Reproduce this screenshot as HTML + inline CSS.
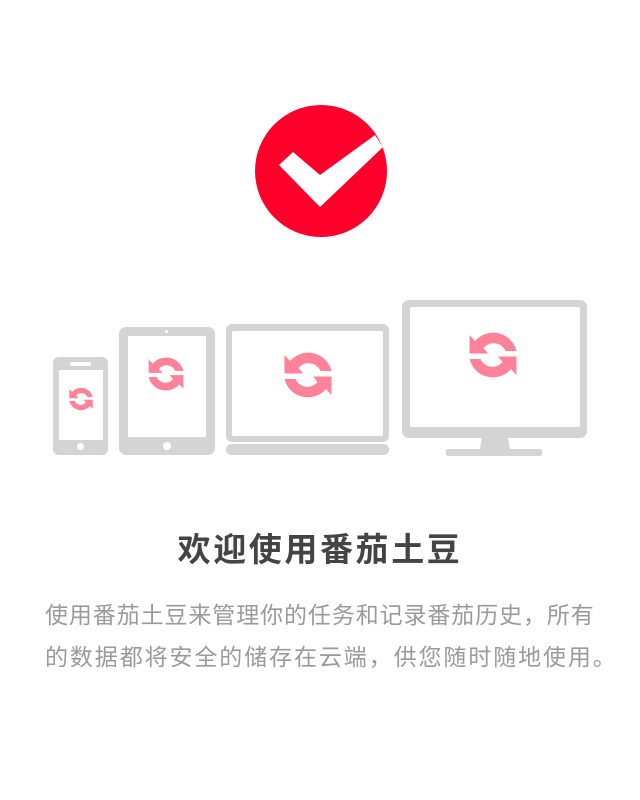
<!DOCTYPE html>
<html><head><meta charset="utf-8"><style>
html,body{margin:0;padding:0;background:#fff;width:640px;height:800px;overflow:hidden;position:relative;font-family:"Liberation Sans","Noto Sans CJK SC",sans-serif}
.a{position:absolute}
.g{background:#d4d4d4}
.w{background:#fff}
.title{position:absolute;left:0;width:640px;top:527px;text-align:center;font-size:33px;font-weight:bold;color:#444;letter-spacing:2.6px;line-height:46px}
.p{position:absolute;left:45px;font-size:23px;color:#9a9a9a;white-space:nowrap;line-height:30px}
</style></head><body>
<svg class="a" style="left:0;top:0" width="640" height="300">
<circle cx="321" cy="171" r="66" fill="#ff002b"/>
<polygon points="279,165 293,152 320,175 375,135 383,147 320,207" fill="#fff"/>
</svg>

<div class="a g" style="left:53px;top:357px;width:55px;height:98px;border-radius:6px"></div>
<div class="a w" style="left:59px;top:370px;width:44px;height:70px"></div>
<div class="a w" style="left:70px;top:362px;width:21px;height:4px;border-radius:2px"></div>
<div class="a w" style="left:77px;top:443px;width:7px;height:7px;border-radius:50%"></div>
<div class="a g" style="left:119px;top:327px;width:96px;height:128px;border-radius:7px"></div>
<div class="a w" style="left:128px;top:336px;width:78px;height:101px"></div>
<div class="a w" style="left:165px;top:330px;width:3px;height:3px;border-radius:50%"></div>
<div class="a w" style="left:163px;top:442px;width:8px;height:8px;border-radius:50%"></div>
<div class="a g" style="left:226px;top:324px;width:163px;height:118px;border-radius:6px"></div>
<div class="a w" style="left:232px;top:331px;width:151px;height:105px;border-radius:2px"></div>
<div class="a g" style="left:226px;top:444px;width:163px;height:11px;border-radius:5px"></div>
<div class="a g" style="left:402px;top:300px;width:185px;height:138px;border-radius:7px"></div>
<div class="a w" style="left:410px;top:307px;width:170px;height:120px;border-radius:2px"></div>
<svg class="a" style="left:0;top:0" width="640" height="470">
<polygon points="482,437 508,437 510,449 480,449" fill="#d4d4d4"/>
<rect x="446" y="449" width="96" height="7" rx="2" fill="#d4d4d4"/>
<defs><g id="s"><path d="M97,42 A48,48 0 0 0 14,22 L3,10 L3,47 L40,47 L31,36 A26,26 0 0 1 75,42 Z" fill="#ff8299"/><path d="M97,42 A48,48 0 0 0 14,22 L3,10 L3,47 L40,47 L31,36 A26,26 0 0 1 75,42 Z" fill="#ff8299" transform="rotate(180 50 50)"/></g></defs>
<use href="#s" transform="translate(68.5,386.5) scale(0.25)"/>
<use href="#s" transform="translate(147.5,355.5) scale(0.37)"/>
<use href="#s" transform="translate(283,350) scale(0.5)"/>
<use href="#s" transform="translate(468,330) scale(0.5)"/>
</svg>

<div class="title">欢迎使用番茄土豆</div>
<div class="p" style="top:600px;letter-spacing:0.9px">使用番茄土豆来管理你的任务和记录番茄历史，所有</div>
<div class="p" style="top:642px;letter-spacing:1.9px">的数据都将安全的储存在云端，供您随时随地使用。</div>
</body></html>
